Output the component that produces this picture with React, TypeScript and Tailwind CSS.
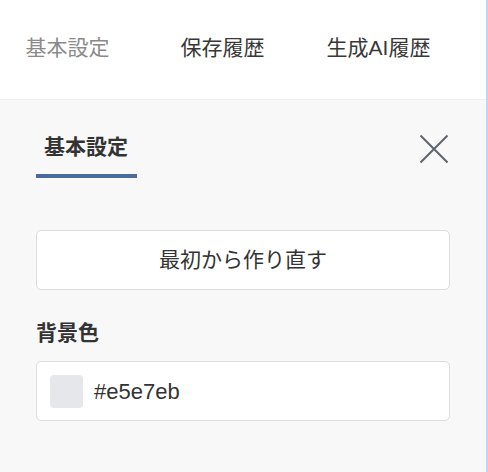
import React from "react";

const font = { fontFamily: '"Liberation Sans", "Noto Sans CJK JP", sans-serif' };

export default function App() {
  return (
    <div className="flex w-[488px] h-[472px] overflow-hidden" style={font}>
      <div className="flex w-[486px] flex-col bg-[#f8f8f8]">
        <div className="grid h-[100px] grid-cols-[135px_175px_137px] items-center border-b border-[#efefef] bg-white pb-[3px] text-[21px]">
          <div className="text-center text-[#8a8a8a]">基本設定</div>
          <div className="text-center text-[#383838]">保存履歴</div>
          <div className="text-center text-[#383838]">生成AI履歴</div>
        </div>
        <div className="flex flex-col px-[36px]">
          <div className="flex items-start justify-between pt-[32px]">
            <div className="flex flex-col">
              <div className="h-[30px] px-[8px] text-[21px] font-bold leading-[30px] text-[#333]">基本設定</div>
              <div className="mt-[12px] h-[4px] w-[101px] bg-[#486b9b]" />
            </div>
            <svg className="mr-[1px] mt-[2px]" width="30" height="30" viewBox="0 0 30 30" fill="none">
              <path d="M1.5 1.5 L28.5 28.5 M28.5 1.5 L1.5 28.5" stroke="#5e636e" strokeWidth="2" />
            </svg>
          </div>
          <div className="mt-[52px] flex h-[60px] items-center justify-center rounded-[5px] border border-[#dddddd] bg-white text-[21px] text-[#333]">
            最初から作り直す
          </div>
          <div className="mt-[28px] h-[30px] text-[21px] font-bold leading-[30px] text-[#333]">背景色</div>
          <div className="mt-[13px] flex h-[60px] items-center rounded-[5px] border border-[#dddddd] bg-white pl-[13px]">
            <div className="h-[33px] w-[33px] rounded-[4px] bg-[#e5e7eb]" />
            <div className="ml-[11px] text-[22px] text-[#333]">#e5e7eb</div>
          </div>
        </div>
      </div>
      <div className="w-[2px] bg-[#bcd6fb]" />
    </div>
  );
}
